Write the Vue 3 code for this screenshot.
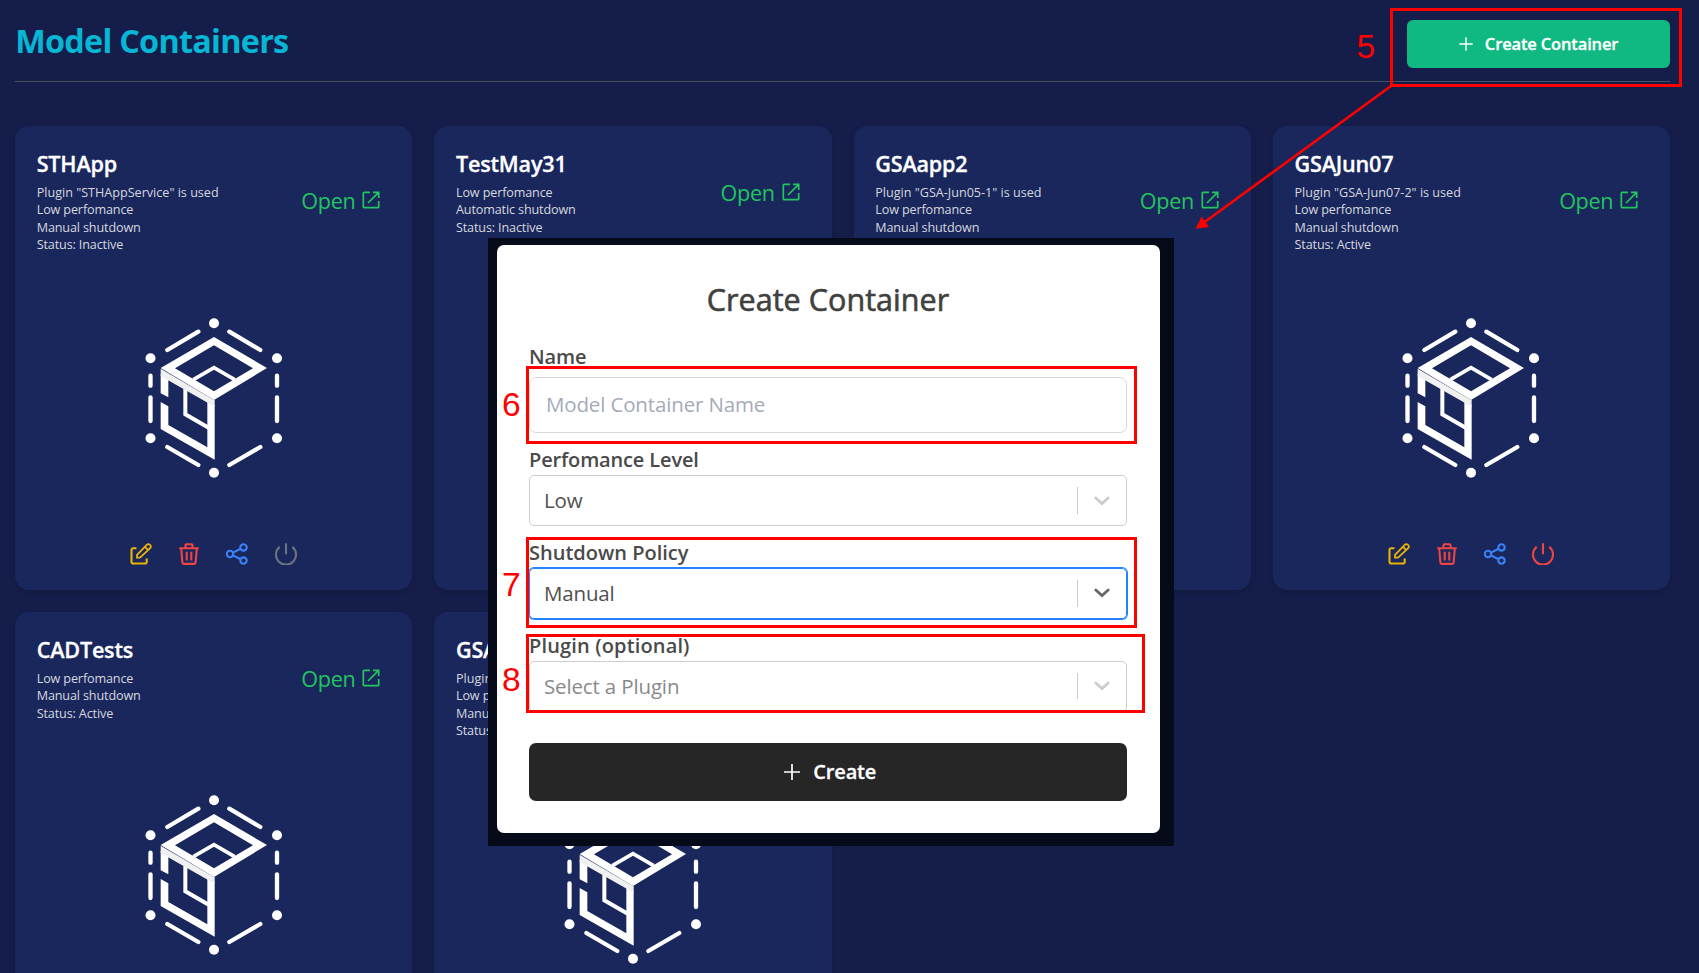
<script setup>
const cards = [
  { name: 'STHApp', lines: ['Plugin "STHAppService" is used', 'Low perfomance', 'Manual shutdown', 'Status: Inactive'], active: false },
  { name: 'TestMay31', lines: ['Low perfomance', 'Automatic shutdown', 'Status: Inactive'], active: false },
  { name: 'GSAapp2', lines: ['Plugin "GSA-Jun05-1" is used', 'Low perfomance', 'Manual shutdown', 'Status: Inactive'], active: false },
  { name: 'GSAJun07', lines: ['Plugin "GSA-Jun07-2" is used', 'Low perfomance', 'Manual shutdown', 'Status: Active'], active: true },
  { name: 'CADTests', lines: ['Low perfomance', 'Manual shutdown', 'Status: Active'], active: true },
  { name: 'GSAJun05', lines: ['Plugin "GSA-Jun05-1" is used', 'Low perfomance', 'Manual shutdown', 'Status: Active'], active: true },
]
const selects = [
  { label: 'Perfomance Level', value: 'Low', kind: '' },
  { label: 'Shutdown Policy', value: 'Manual', kind: 'focused' },
  { label: 'Plugin (optional)', value: 'Select a Plugin', kind: 'empty' },
]
</script>

<template>
  <div class="page">
    <header class="top">
      <h1>Model Containers</h1>
      <button class="create-btn">
        <svg width="14" height="14" viewBox="0 0 14 14"><path d="M7 0.3V13.7M0.3 7H13.7" stroke="#fff" stroke-width="1.4" /></svg>
        <span>Create Container</span>
      </button>
    </header>

    <main class="grid">
      <article v-for="c in cards" :key="c.name" class="card">
        <div class="head">
          <div class="info">
            <h2>{{ c.name }}</h2>
            <p v-for="l in c.lines" :key="l" :class="{ plugin: l.startsWith('Plugin') }">{{ l }}</p>
          </div>
          <a class="open">
            <span>Open</span>
            <svg width="18" height="18" viewBox="0 0 18 18" fill="none" stroke="currentColor" stroke-width="1.7">
              <path d="M8 1.3H2.3a1 1 0 0 0-1 1V15.7a1 1 0 0 0 1 1H15.7a1 1 0 0 0 1-1V10" />
              <path d="M11 1.3H16.7V7M16.4 1.6L6 12" />
            </svg>
          </a>
        </div>
        <div class="logo">
          <svg width="138" height="160" viewBox="46 38 412 480" fill="none">
            <g fill="#fff">
              <circle cx="252" cy="54" r="15" /><circle cx="252" cy="502" r="15" />
              <circle cx="61.500" cy="158.500" r="15" /><circle cx="441" cy="158.500" r="15" />
              <circle cx="61.500" cy="399" r="15" /><circle cx="441" cy="399" r="15" />
            </g>
            <g stroke="#fff" stroke-width="13" stroke-linecap="round">
              <path d="M112 134L205 79M298 79L391 134M112 425L205 479M298 479L391 425" />
              <path d="M61.500 211V241M61.500 276V347M441 211V241M441 276V347" />
            </g>
            <path fill="#fff" fill-rule="evenodd" d="M252 95L411 188L252 284L92 188ZM252 120L135 189L252 258L369 189Z" />
            <path stroke="#fff" stroke-width="11" d="M190 223L252 187L314 223" />
            <path fill="#fff" d="M92 205L115 218V276L92 264ZM92 290L115 303V359L232 426V288L254 298V463L92 371Z" />
            <path stroke="#fff" stroke-width="12" d="M166 250V327L236 367" />
            <path fill="#f0f0f0" d="M92 190L252 284L254 283V304L92 212Z" />
          </svg>
        </div>
        <div class="actions">
          <svg class="edit" viewBox="0 0 22 22">
            <path d="M6.500 5.300H3.200A1.600 1.600 0 0 0 1.500 7V19A1.600 1.600 0 0 0 3.200 20.500H15A1.600 1.600 0 0 0 16.700 19V15.500" />
            <path d="M7 14.600V11.800L16.700 1.800A2.450 2.450 0 0 1 20.200 5.200L10 14.600ZM15 3.800L17.800 6.600" stroke-width="1.800" />
          </svg>
          <svg class="trash" viewBox="0 0 22 22">
            <path d="M1.200 5.300H20.800M7.500 5V2.300A1 1 0 0 1 8.500 1.300H13.500A1 1 0 0 1 14.500 2.300V5M3.200 5.500L4.400 19.500A1.400 1.400 0 0 0 5.800 20.900H16.200A1.400 1.400 0 0 0 17.600 19.500L18.800 5.500M8.700 8.700V17.400M13.300 8.700V17.400" />
          </svg>
          <svg class="share" viewBox="0 0 22 22">
            <circle cx="4" cy="11" r="3.200" /><circle cx="17.500" cy="4.400" r="3.200" /><circle cx="17.500" cy="17.600" r="3.200" />
            <path d="M7 9.600L14.600 5.800M7 12.400L14.600 16.200" />
          </svg>
          <svg :class="c.active ? 'power on' : 'power'" viewBox="0 0 22 22">
            <path d="M4.700 3.900A10 10 0 1 0 17.300 3.900M11 0.200V11.300" />
          </svg>
        </div>
      </article>
    </main>

    <div class="backdrop">
      <section class="modal">
        <h3>Create Container</h3>
        <label class="name-label">Name</label>
        <div class="input">Model Container Name</div>
        <div v-for="s in selects" :key="s.label" class="field">
          <label>{{ s.label }}</label>
          <div class="select" :class="s.kind">
            <span>{{ s.value }}</span>
            <i></i>
            <svg width="16" height="10" viewBox="0 0 16 10" fill="none" stroke="currentColor" stroke-width="2.700" stroke-linecap="round"><path d="M1.800 2L8 7.600L14.200 2" /></svg>
          </div>
        </div>
        <button class="submit">
          <svg width="16" height="16" viewBox="0 0 16 16"><path d="M8 0V16M0 8H16" stroke="#fff" stroke-width="1.700" /></svg>
          <span>Create</span>
        </button>
      </section>
    </div>

    <svg class="notes" width="1699" height="973" viewBox="0 0 1699 973">
      <g fill="none" stroke="#f00" stroke-width="3">
        <rect x="1391.500" y="9.500" width="289" height="76" />
        <rect x="527.500" y="367.500" width="608" height="75" />
        <rect x="527.500" y="538.500" width="608" height="88" />
        <rect x="527.500" y="635.500" width="616" height="76" />
        <path d="M1391 86L1204 222.500" stroke-width="2.600" />
      </g>
      <path d="M1195.500 228.700L1201.700 216.500L1209 227Z" fill="#f00" />
      <g fill="#f00" class="digits">
        <text x="1356.500" y="58">5</text>
        <text x="502" y="415.500">6</text>
        <text x="502" y="596">7</text>
        <text x="502" y="691">8</text>
      </g>
    </svg>
  </div>
</template>

<style>
body { margin: 0; background: #151e4a; overflow: hidden; }
</style>

<style scoped>
.page {
  position: relative;
  box-sizing: border-box;
  width: 1699px;
  height: 973px;
  overflow: hidden;
  padding: 0 28.700px 0 15.200px;
  background: #151e4a;
  font-family: "Open Sans", "Noto Sans", sans-serif;
}
h1, h2, h3, p { margin: 0; }
button { border: 0; padding: 0; font-family: inherit; }
.top {
  box-sizing: border-box;
  height: 82px;
  padding-top: 19.500px;
  border-bottom: 1px solid #4b505c;
  display: flex;
  justify-content: space-between;
  align-items: flex-start;
}
h1 {
  font-size: 32.400px;
  line-height: 40px;
  font-weight: 700;
  letter-spacing: -0.750px;
  color: #06b6d4;
}
.create-btn {
  display: flex;
  align-items: center;
  justify-content: center;
  gap: 11.500px;
  width: 263px;
  height: 48.500px;
  border-radius: 6px;
  background: #10b981;
  color: #fff;
  font-size: 16.500px;
  font-weight: 600;
  letter-spacing: -0.150px;
  -webkit-text-stroke: 0.300px #fff;
}
.grid {
  margin-top: 44px;
  display: grid;
  grid-template-columns: repeat(4, 1fr);
  grid-auto-rows: 464px;
  gap: 22px;
}
.card {
  box-sizing: border-box;
  display: flex;
  flex-direction: column;
  padding: 22px 32px 21px 21.500px;
  border-radius: 14px;
  background: #19275d;
  box-shadow: 0 3px 6px -1px rgba(0, 0, 0, 0.180);
}
.head {
  display: flex;
  align-items: center;
  justify-content: space-between;
}
h2 {
  margin-bottom: 4.500px;
  padding-top: 1px;
  font-size: 21.600px;
  line-height: 31px;
  font-weight: 600;
  letter-spacing: -0.200px;
  -webkit-text-stroke: 0.300px #fff;
  color: #fff;
}
.info { margin-top: -1px; padding-bottom: 1px; }
p {
  font-size: 12.600px;
  line-height: 17.500px;
  letter-spacing: -0.130px;
  color: #d6d8de;
}
.plugin { letter-spacing: 0; }
.open {
  display: flex;
  align-items: center;
  gap: 7px;
  font-size: 21.600px;
  line-height: 30px;
  letter-spacing: -0.300px;
  color: #22c55e;
}
.open svg { margin-top: -2px; }
.logo {
  flex: 1;
  display: flex;
  align-items: center;
  justify-content: center;
  padding-left: 10px;
}
.actions {
  height: 28.500px;
  display: flex;
  align-items: center;
  justify-content: center;
  gap: 26.200px;
  padding-left: 9.500px;
  padding-bottom: 1px;
  margin-top: -1px;
}
.actions svg {
  width: 22px;
  height: 22px;
  fill: none;
  stroke: currentColor;
  stroke-width: 2.100;
}
.edit { color: #eab308; }
.trash { color: #ef4444; }
.share { color: #3b82f6; }
.power { color: #6b7280; }
.power.on { color: #ef4444; }
.backdrop {
  position: absolute;
  left: 488px;
  top: 238px;
  box-sizing: border-box;
  width: 686px;
  height: 608px;
  padding: 6.500px 14.500px 13px 9px;
  background: #050b19;
}
.modal {
  box-sizing: border-box;
  height: 588.500px;
  padding: 32.500px 32.500px 0 32px;
  border-radius: 7px;
  background: #fff;
  color: #404040;
}
h3 {
  height: 44px;
  line-height: 44px;
  text-align: center;
  font-size: 30.500px;
  font-weight: 400;
  letter-spacing: 0.050px;
  -webkit-text-stroke: 0.600px #404040;
}
label {
  display: block;
  height: 26px;
  line-height: 26px;
  font-size: 20px;
  font-weight: 600;
  letter-spacing: -0.150px;
  color: #4a4a4a;
}
.name-label { margin-top: 23px; }
.input {
  box-sizing: border-box;
  height: 56px;
  margin: 7px 0 10px;
  padding-left: 16px;
  border: 1.500px solid #d9d9d9;
  border-radius: 7px;
  font-size: 20.500px;
  line-height: 53px;
  letter-spacing: -0.150px;
  color: #a3abb9;
}
.field { height: 92.800px; padding-top: 4px; box-sizing: border-box; }
.field:nth-of-type(4) label { letter-spacing: 0.150px; }
.field:nth-of-type(3) label { letter-spacing: 0; }
.select {
  box-sizing: border-box;
  height: 51px;
  margin-top: 2px;
  padding: 0 16.500px 0 14px;
  border: 1px solid #ccc;
  border-radius: 5px;
  display: flex;
  align-items: center;
  font-size: 20.500px;
  letter-spacing: -0.150px;
  color: #505050;
}
.select span { flex: 1; margin-top: -1px; }
.select i { width: 1px; height: 26.500px; margin-right: 16px; background: #ccc; }
.select svg { color: #ccc; }
.select.focused { border-color: #2684ff; box-shadow: 0 0 0 1px #2080ff; }
.select.focused svg { color: #666; }
.select.empty { color: #8a8a8a; }
.submit {
  margin-top: 21.500px;
  width: 100%;
  height: 58px;
  display: flex;
  align-items: center;
  justify-content: center;
  gap: 13.500px;
  padding-left: 4px;
  border-radius: 7px;
  background: #262626;
  color: #fff;
  font-size: 20px;
  font-weight: 600;
  letter-spacing: -0.150px;
  -webkit-text-stroke: 0.300px #fff;
}
.notes { position: absolute; left: 0; top: 0; }
.digits { font-family: "Liberation Sans", Arial, sans-serif; font-size: 33.500px; }
</style>
